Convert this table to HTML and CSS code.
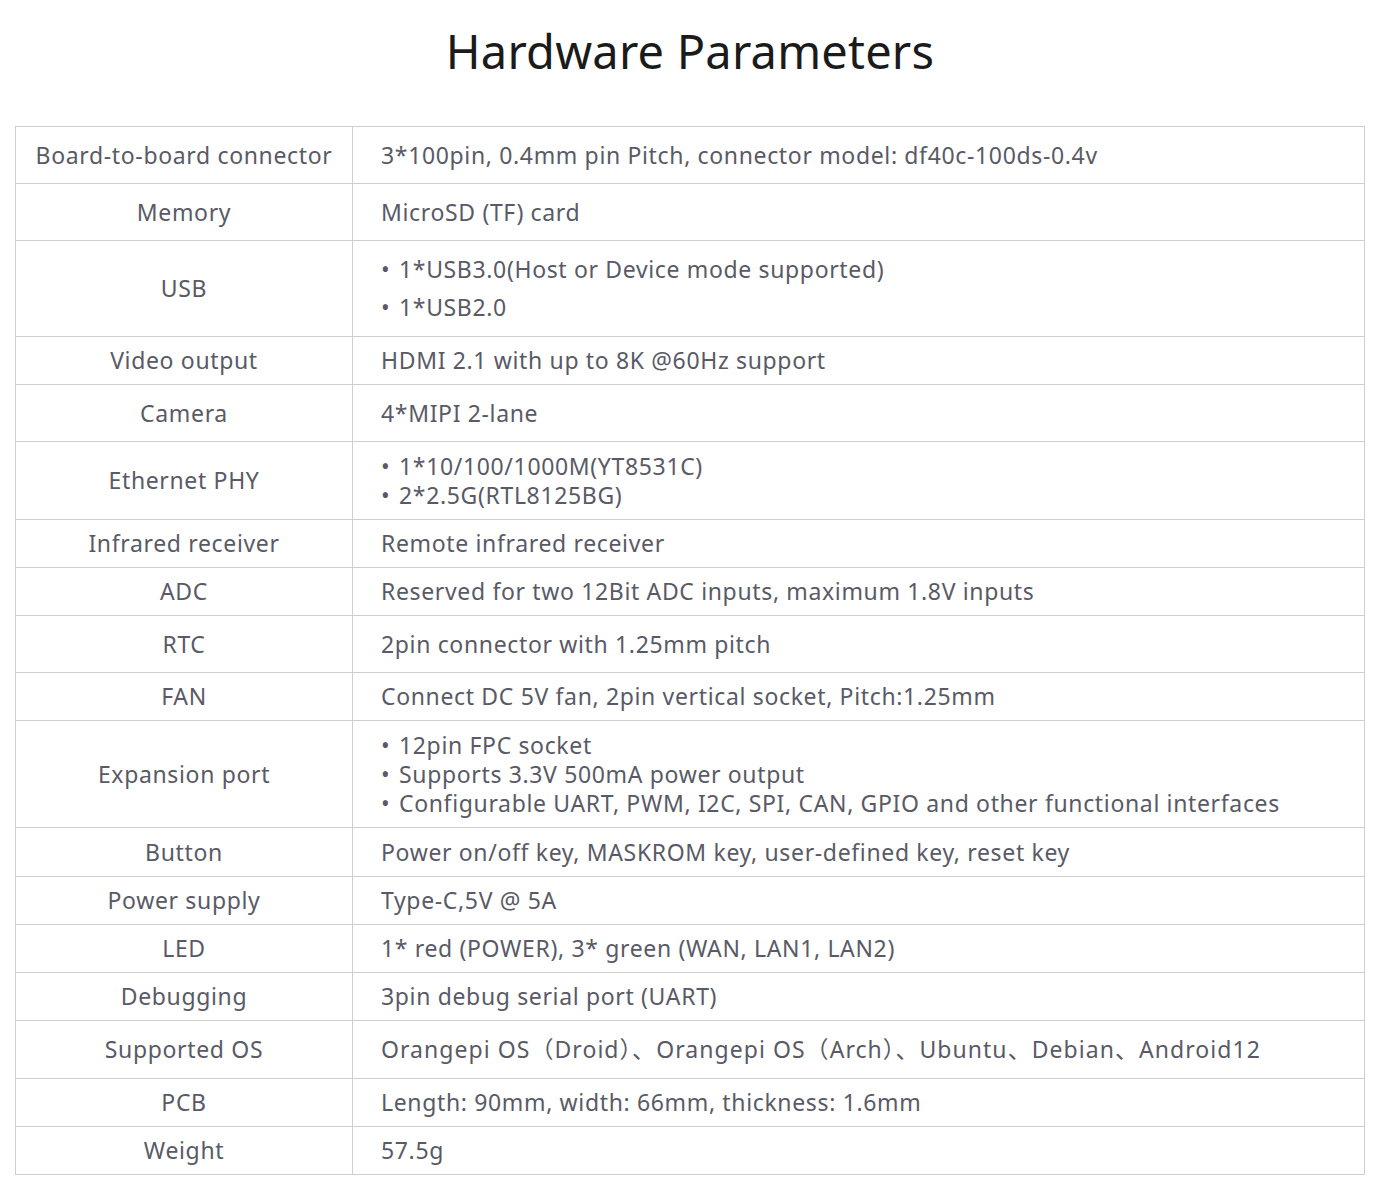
FILE: index.html
```html
<!DOCTYPE html>
<html lang="en">
<head>
<meta charset="utf-8">
<title>Hardware Parameters</title>
<link rel="stylesheet" href="styles.css">
</head>
<body>
<main class="page">
  <h1 class="title">Hardware Parameters</h1>
  <table class="spec">
    <tbody>
      <tr class="h57"><th>Board-to-board connector</th><td>3*100pin, 0.4mm pin Pitch, connector model: df40c-100ds-0.4v</td></tr>
      <tr class="h57"><th>Memory</th><td>MicroSD (TF) card</td></tr>
      <tr class="h96"><th>USB</th><td><ul class="bullets spaced"><li>1*USB3.0(Host or Device mode supported)</li><li>1*USB2.0</li></ul></td></tr>
      <tr class="h48"><th>Video output</th><td>HDMI 2.1 with up to 8K @60Hz support</td></tr>
      <tr class="h57"><th>Camera</th><td>4*MIPI 2-lane</td></tr>
      <tr class="h78"><th>Ethernet PHY</th><td><ul class="bullets"><li>1*10/100/1000M(YT8531C)</li><li>2*2.5G(RTL8125BG)</li></ul></td></tr>
      <tr class="h48"><th>Infrared receiver</th><td>Remote infrared receiver</td></tr>
      <tr class="h48"><th>ADC</th><td>Reserved for two 12Bit ADC inputs, maximum 1.8V inputs</td></tr>
      <tr class="h57"><th>RTC</th><td>2pin connector with 1.25mm pitch</td></tr>
      <tr class="h48"><th>FAN</th><td>Connect DC 5V fan, 2pin vertical socket, Pitch:1.25mm</td></tr>
      <tr class="h107"><th>Expansion port</th><td><ul class="bullets"><li>12pin FPC socket</li><li>Supports 3.3V 500mA power output</li><li>Configurable UART, PWM, I2C, SPI, CAN, GPIO and other functional interfaces</li></ul></td></tr>
      <tr class="h49"><th>Button</th><td>Power on/off key, MASKROM key, user-defined key, reset key</td></tr>
      <tr class="h48"><th>Power supply</th><td>Type-C,5V @ 5A</td></tr>
      <tr class="h48"><th>LED</th><td>1* red (POWER), 3* green (WAN, LAN1, LAN2)</td></tr>
      <tr class="h48"><th>Debugging</th><td>3pin debug serial port (UART)</td></tr>
      <tr class="h58"><th>Supported OS</th><td class="os">Orangepi OS（Droid）、Orangepi OS（Arch）、Ubuntu、Debian、Android12</td></tr>
      <tr class="h48"><th>PCB</th><td>Length: 90mm, width: 66mm, thickness: 1.6mm</td></tr>
      <tr class="h48"><th>Weight</th><td>57.5g</td></tr>
    </tbody>
  </table>
</main>
</body>
</html>
```

FILE: styles.css
```css
html, body {
  margin: 0;
  padding: 0;
  background: #ffffff;
}

.page {
  padding: 0 15px 0 15px;
  font-family: "Noto Sans", "Open Sans", "Noto Sans CJK SC", sans-serif;
}

.title {
  margin: 0;
  padding-top: 21px;
  height: 126px;
  box-sizing: border-box;
  text-align: center;
  font-weight: 400;
  font-size: 47px;
  line-height: 60px;
  letter-spacing: 0.2px;
  color: #1b1b1b;
}

.spec {
  width: 1350px;
  border-collapse: collapse;
  color: #595a66;
  font-size: 23px;
  line-height: 29px;
  letter-spacing: 0.65px;
}

.spec th,
.spec td {
  border: 1px solid #cfcfcf;
  padding: 0;
  vertical-align: middle;
}

.spec th {
  width: 336px;
  font-weight: 400;
  text-align: center;
}

.spec td {
  text-align: left;
  padding-left: 28px;
}

.spec td.os {
  letter-spacing: 1.05px;
}

.h48 { height: 48px; }
.h49 { height: 49px; }
.h57 { height: 57px; }
.h58 { height: 58px; }
.h78 { height: 78px; }
.h96 { height: 96px; }
.h107 { height: 107px; }

.bullets {
  list-style: none;
  margin: 0;
  padding: 0;
}

.bullets li::before {
  content: "•";
  display: inline-block;
  width: 18px;
}

.bullets.spaced li + li {
  margin-top: 9px;
}
```
